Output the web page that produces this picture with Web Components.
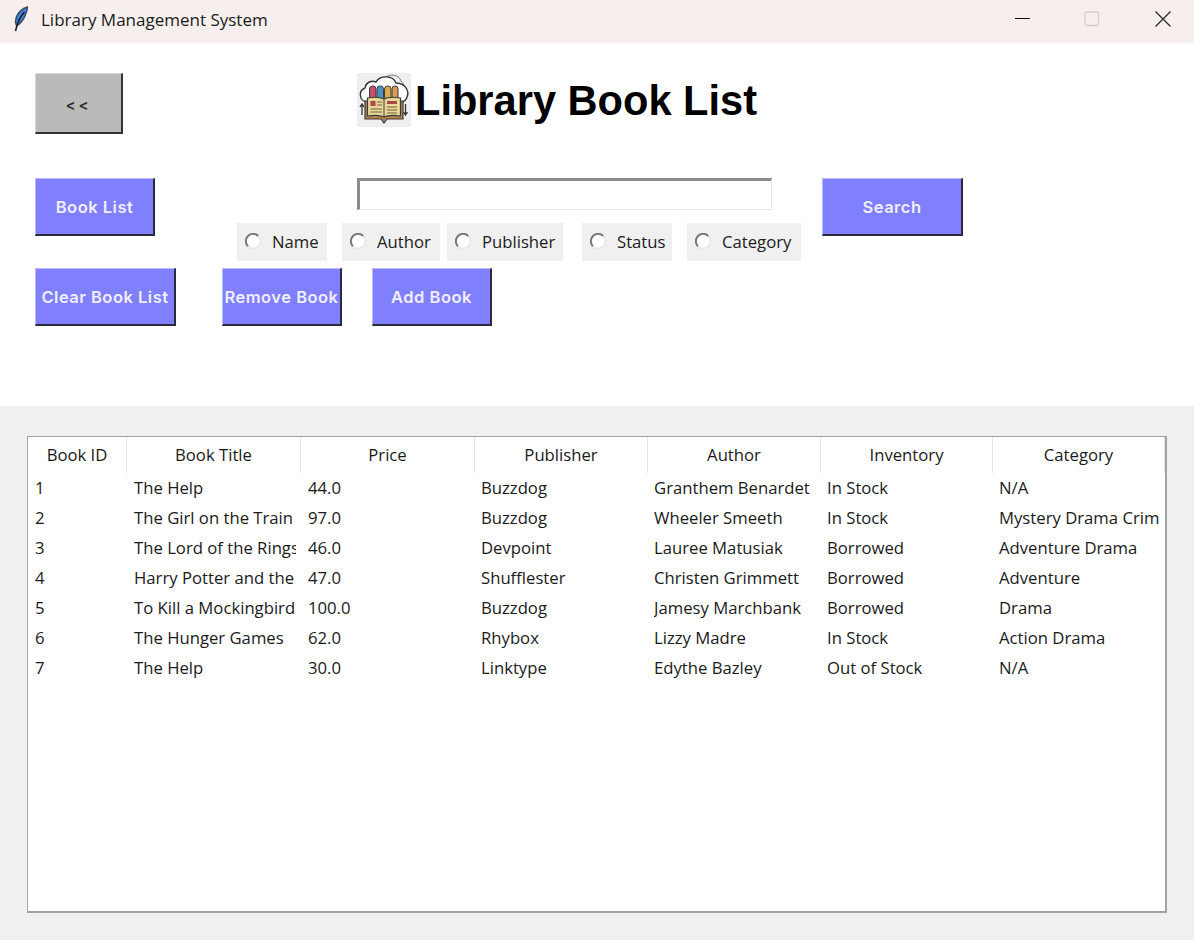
<!DOCTYPE html>
<html>
<head>
<meta charset="utf-8">
<title>Library Management System</title>
<style>
    html, body { margin: 0; padding: 0; background: #f0f0f0; overflow: hidden; }
    body { width: 1194px; height: 940px; font-family: "Open Sans", "Noto Sans", sans-serif; }
</style>
</head>
<body>
<title-bar>Library Management System</title-bar>
<main-panel>
    <tk-button slot="back" kind="gray" style="width:88px;height:61px">&lt;&lt;</tk-button>
    <book-logo slot="logo"></book-logo>
    <span slot="heading">Library Book List</span>
    <tk-button slot="list" style="width:120px;height:58px">Book List</tk-button>
    <tk-entry slot="entry"></tk-entry>
    <tk-radio slot="radios" style="width:90px">Name</tk-radio>
    <tk-radio slot="radios" style="width:98px;margin-left:15px">Author</tk-radio>
    <tk-radio slot="radios" style="width:116px;margin-left:7px">Publisher</tk-radio>
    <tk-radio slot="radios" style="width:90px;margin-left:19px">Status</tk-radio>
    <tk-radio slot="radios" style="width:114px;margin-left:15px">Category</tk-radio>
    <tk-button slot="search" style="width:141px;height:58px">Search</tk-button>
    <tk-button slot="actions" style="width:141px;height:58px">Clear Book List</tk-button>
    <tk-button slot="actions" style="width:120px;height:58px;margin-left:46px">Remove Book</tk-button>
    <tk-button slot="actions" style="width:120px;height:58px;margin-left:30px">Add Book</tk-button>
</main-panel>
<book-table></book-table>

<script>
class TitleBar extends HTMLElement {
    constructor() {
        super();
        this.shadowHTML = this.attachShadow({ mode: "open" });
        this.shadowHTML.innerHTML = `
        <style>
            :host {
                display: flex;
                align-items: center;
                height: 43px;
                background: #f7efee;
                color: #1a1a1a;
                font-family: "Open Sans", sans-serif;
                font-size: 17px;
            }
            .feather { width: 16px; height: 26px; margin-left: 13px; margin-right: 12px; margin-top: -6px; }
            .caption { flex: 1; margin-top: -5px; }
            .ctl { height: 43px; display: flex; align-items: center; justify-content: center; margin-top: -5px; }
            svg { display: block; }
        </style>
        <svg class="feather" viewBox="0 0 16 26">
            <path d="M14.500 1 C9 2 4.500 7 3 12 C2 15 2.500 18 3.500 20 C7 18 10 15 12 10 C13.500 7 14.500 4 14.500 1 Z" fill="#3d7ed6" stroke="#3a4658" stroke-width="1.300"/>
            <path d="M11.500 6 C7.500 10 4.500 16 2.500 25" fill="none" stroke="#141a26" stroke-width="1.500"/>
        </svg>
        <span class="caption"><slot></slot></span>
        <span class="ctl" style="width:59px"><svg width="16" height="16"><path d="M0 7.500H15" stroke="#111" stroke-width="1"/></svg></span>
        <span class="ctl" style="width:79px"><svg width="16" height="16"><rect x="1" y="1" width="13.500" height="13.500" rx="2" fill="none" stroke="#cfcfcf" stroke-width="1.300"/></svg></span>
        <span class="ctl" style="width:63px"><svg width="16" height="16"><path d="M0.500 0.500L15.500 15.500M15.500 0.500L0.500 15.500" stroke="#222" stroke-width="1.200"/></svg></span>
        `;
    }
}

class TkButton extends HTMLElement {
    constructor() {
        super();
        this.shadowHTML = this.attachShadow({ mode: "open" });
        this.shadowHTML.innerHTML = `
        <style>
            :host {
                display: flex;
                align-items: center;
                justify-content: center;
                box-sizing: border-box;
                flex: none;
                background: #8080ff;
                color: #f0eeff;
                font-family: Inter, "Liberation Sans", sans-serif;
                font-size: 16.500px;
                letter-spacing: 0.500px;
                font-weight: 600;
                border-style: solid;
                border-width: 1px 2px 2px 1px;
                border-color: #b9b9ff #2a2a3a #2a2a3a #b9b9ff;
                white-space: nowrap;
                overflow: hidden;
            }
            :host([kind="gray"]) {
                background: #b9bbb9;
                color: #2c2c2c;
                font-weight: 600;
                font-size: 15px;
                letter-spacing: 3px;
                padding-top: 2px;
                border-color: #d6d6d6 #333 #333 #d6d6d6;
            }
        </style>
        <slot></slot>
        `;
    }
}

class TkEntry extends HTMLElement {
    constructor() {
        super();
        this.shadowHTML = this.attachShadow({ mode: "open" });
        this.shadowHTML.innerHTML = `
        <style>
            :host {
                display: block;
                box-sizing: border-box;
                width: 415px;
                height: 32px;
                margin-left: 120px;
                background: #fff;
                border-style: solid;
                border-width: 3px 1px 1px 3px;
                border-color: #8a8a8a #e6e6e6 #e6e6e6 #8a8a8a;
            }
        </style>
        `;
    }
}

class TkRadio extends HTMLElement {
    constructor() {
        super();
        this.shadowHTML = this.attachShadow({ mode: "open" });
        this.shadowHTML.innerHTML = `
        <style>
            :host {
                display: flex;
                align-items: center;
                box-sizing: border-box;
                flex: none;
                height: 38px;
                padding-left: 8px;
                background: #f0f0f0;
                color: #1c1c1c;
                font-family: "Open Sans", sans-serif;
                font-size: 16.700px;
                white-space: nowrap;
            }
            svg { display: block; margin-right: 11px; margin-top: -3px; flex: none; }
            span { margin-top: -2px; }
        </style>
        <svg width="16" height="16" viewBox="0 0 16 16">
            <circle cx="8" cy="8" r="7" fill="#fff"/>
            <path d="M13.300 3 A7 7 0 0 0 3 13.300" fill="none" stroke="#777" stroke-width="2"/>
            <path d="M3 13.300 A7 7 0 0 0 13.300 3" fill="none" stroke="#e6e6e6" stroke-width="1.300"/>
        </svg>
        <span><slot></slot></span>
        `;
    }
}

class BookLogo extends HTMLElement {
    constructor() {
        super();
        this.shadowHTML = this.attachShadow({ mode: "open" });
        this.shadowHTML.innerHTML = `
        <style>
            :host { display: block; width: 54px; height: 54px; flex: none; background: #efefef; }
            svg { display: block; }
        </style>
        <svg width="54" height="54" viewBox="0 0 54 54">
            <path d="M27 6 C31 0 42 1 44 8 C46 10 47 12 47 14" fill="none" stroke="#777" stroke-width="1"/>
            <path d="M10 29 C2 28 1 18 8 15 C9 9 15 7 19 9 C23 2 36 2 39 10 C47 10 53 17 50 24 C49 27 47 29 44 29 Z" fill="#fff" stroke="#333" stroke-width="1.400"/>
            <rect x="12.500" y="13" width="6.500" height="14" rx="3" fill="#c9506c" stroke="#3a3a3a" stroke-width="1"/>
            <rect x="20" y="13" width="6.500" height="14" rx="3" fill="#4b92c4" stroke="#3a3a3a" stroke-width="1"/>
            <rect x="27.500" y="13" width="6.500" height="14" rx="3" fill="#d9ad45" stroke="#3a3a3a" stroke-width="1"/>
            <rect x="35" y="13" width="6" height="14" rx="3" fill="#d99a55" stroke="#3a3a3a" stroke-width="1"/>
            <path d="M8 46 V28 H46 V46 H30 L27 50 L24 46 Z" fill="#b8834f" stroke="#3a3a3a" stroke-width="1.200"/>
            <path d="M10.500 43 V25 C16 24 23 24 27 26 C31 24 38 24 43.500 25 V43 C37 42 31 42 27 44 C23 42 17 42 10.500 43 Z" fill="#e9d698" stroke="#3a3a3a" stroke-width="1.200"/>
            <path d="M27 26 V44" stroke="#3a3a3a" stroke-width="1"/>
            <rect x="13.500" y="28" width="5" height="5" fill="#a8494a"/>
            <path d="M20 29H25M20 32H25" stroke="#6f6244" stroke-width="1"/>
            <rect x="30" y="28" width="10" height="3" fill="#a8494a"/>
            <path d="M13.500 36H25M13.500 39H25M30 34H40M30 37H40M30 40H40" stroke="#6f6244" stroke-width="1"/>
            <path d="M5 42V31M3 34L5 31L7 34" fill="none" stroke="#333" stroke-width="1.300"/>
            <path d="M48.500 31V42M46.500 39L48.500 42L50.500 39" fill="none" stroke="#333" stroke-width="1.300"/>
        </svg>
        `;
    }
}

class MainPanel extends HTMLElement {
    constructor() {
        super();
        this.shadowHTML = this.attachShadow({ mode: "open" });
        this.shadowHTML.innerHTML = `
        <style>
            :host {
                display: block;
                box-sizing: border-box;
                height: 363px;
                padding: 30px 0 0 35px;
                background: #fff;
            }
            .top { display: flex; height: 105px; }
            .brand {
                display: flex;
                margin-left: 234px;
                height: 54px;
                align-items: center;
                gap: 4px;
            }
            .brand ::slotted(span) {
                font-family: "Liberation Sans", Arial, sans-serif;
                font-size: 41.600px;
                font-weight: 700;
                color: #000;
                margin-top: 2px;
            }
            .middle { display: flex; height: 83px; margin-bottom: 7px; }
            .center { width: 564px; margin-left: 82px; }
            .radios { display: flex; margin-top: 13px; }
            .search { margin-left: 21px; }
            .actions { display: flex; }
        </style>
        <div class="top">
            <slot name="back"></slot>
            <div class="brand"><slot name="logo"></slot><slot name="heading"></slot></div>
        </div>
        <div class="middle">
            <slot name="list"></slot>
            <div class="center">
                <slot name="entry"></slot>
                <div class="radios"><slot name="radios"></slot></div>
            </div>
            <div class="search"><slot name="search"></slot></div>
        </div>
        <div class="actions"><slot name="actions"></slot></div>
        `;
    }
}

class BookTable extends HTMLElement {
    constructor() {
        super();
        this.shadowHTML = this.attachShadow({ mode: "open" });
    }

    set books(books) {
        this._books = books;
        this.render();
    }

    // Render header and rows
    render() {
        const heads = ["Book ID", "Book Title", "Price", "Publisher", "Author", "Inventory", "Category"];
        this.shadowHTML.innerHTML = `
        <style>
            :host {
                display: block;
                box-sizing: border-box;
                width: 1140px;
                height: 477px;
                margin: 30px 0 0 27px;
                background: #fff;
                border: 1px solid #a0a4a8;
                border-width: 1px 2px 2px 1px;
                color: #1a1a1a;
                font-family: "Open Sans", sans-serif;
                font-size: 16.700px;
            }
            .row {
                display: grid;
                grid-template-columns: 99px 174px 174px 173px 173px 172px 172px;
                height: 30px;
                align-items: center;
            }
            .row.head { height: 36px; }
            .head span {
                box-sizing: border-box;
                height: 36px;
                line-height: 36px;
                text-align: center;
                border-right: 1px solid #e5e5e5;
            }
            .cell {
                margin: -1px 5px 0 7px;
                overflow: hidden;
                white-space: nowrap;
            }
            .cell:nth-child(n+4) { margin-left: 6px; }
        </style>
        <div class="row head">${heads.map(h => `<span>${h}</span>`).join("")}</div>
        `;
        this._books.forEach(book => {
            const row = document.createElement("div");
            row.classList.add("row");
            row.innerHTML = book.map(v => `<div class="cell">${v}</div>`).join("");
            this.shadowHTML.appendChild(row);
        });
    }
}

customElements.define("title-bar", TitleBar);
customElements.define("tk-button", TkButton);
customElements.define("tk-entry", TkEntry);
customElements.define("tk-radio", TkRadio);
customElements.define("book-logo", BookLogo);
customElements.define("main-panel", MainPanel);
customElements.define("book-table", BookTable);

document.querySelector("book-table").books = [
    [1, "The Help", "44.0", "Buzzdog", "Granthem Benardet", "In Stock", "N/A"],
    [2, "The Girl on the Train", "97.0", "Buzzdog", "Wheeler Smeeth", "In Stock", "Mystery Drama Crime"],
    [3, "The Lord of the Rings", "46.0", "Devpoint", "Lauree Matusiak", "Borrowed", "Adventure Drama"],
    [4, "Harry Potter and the", "47.0", "Shufflester", "Christen Grimmett", "Borrowed", "Adventure"],
    [5, "To Kill a Mockingbird", "100.0", "Buzzdog", "Jamesy Marchbank", "Borrowed", "Drama"],
    [6, "The Hunger Games", "62.0", "Rhybox", "Lizzy Madre", "In Stock", "Action Drama"],
    [7, "The Help", "30.0", "Linktype", "Edythe Bazley", "Out of Stock", "N/A"]
];
</script>
</body>
</html>
